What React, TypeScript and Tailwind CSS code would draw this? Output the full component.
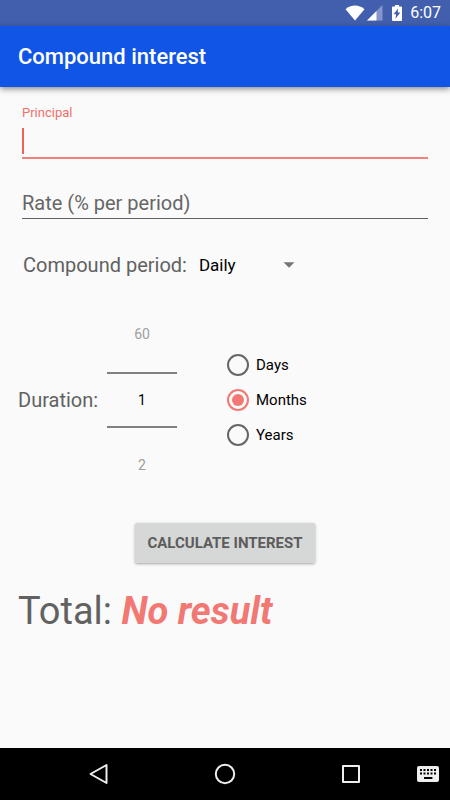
import { useState } from "react";

const units = ["Days", "Months", "Years"];

const StatusBar = () => {
  return (
    <div className="flex h-[26px] items-center justify-end bg-[#425fae] pr-[9px] text-white">
      <svg className="mr-[2px] h-4 w-5" viewBox="0 0 20 16" fill="currentColor">
        <path d="M0.5 4.2C6 -0.6 14 -0.6 19.5 4.2L10 15.5Z" />
      </svg>
      <svg className="mr-[9px] h-4 w-4" viewBox="0 0 16 16" fill="currentColor">
        <path d="M0 15.5L15.5 0V15.5Z" opacity="0.35" />
        <path d="M0 15.5L9.5 6V15.5Z" />
      </svg>
      <svg className="mr-2 h-4 w-[10px]" viewBox="0 0 10 16">
        <path
          d="M1 1.6H3V0H7V1.6H9Q10 1.6 10 2.6V15Q10 16 9 16H1Q0 16 0 15V2.6Q0 1.6 1 1.6Z"
          fill="currentColor"
        />
        <path d="M6 3.6L1.6 9.2H4.2L3.4 13.8L8.4 7.6H5.8Z" fill="#425fae" />
      </svg>
      <span className="text-[16px] leading-5">6:07</span>
    </div>
  );
};

const NavBar = () => {
  return (
    <nav className="flex h-[52px] bg-black pl-9 text-[#eeeeee]">
      <button aria-label="Back" className="flex flex-1 items-center justify-center">
        <svg className="h-6 w-6" viewBox="0 0 24 24" fill="none" stroke="currentColor" strokeWidth="2" strokeLinejoin="round">
          <path d="M19.5 3V21L3.5 12Z" />
        </svg>
      </button>
      <button aria-label="Home" className="flex flex-1 items-center justify-center">
        <svg className="h-6 w-6" viewBox="0 0 24 24" fill="none" stroke="currentColor" strokeWidth="2">
          <circle cx="12" cy="12" r="9.2" />
        </svg>
      </button>
      <button aria-label="Recent apps" className="flex flex-1 items-center justify-center">
        <svg className="h-6 w-6" viewBox="0 0 24 24" fill="none" stroke="currentColor" strokeWidth="2" strokeLinejoin="round">
          <path d="M4 4H20V20H4Z" />
        </svg>
      </button>
      <button aria-label="Keyboard" className="flex w-9 items-center justify-center pr-2">
        <svg className="h-4 w-[22px] shrink-0" viewBox="0 0 22 16">
          <rect width="22" height="16" rx="2" fill="currentColor" />
          <path
            d="M3 4h2M6.5 4h2M10 4h2M13.5 4h2M17 4h2M3 7.6h2M6.5 7.6h2M10 7.6h2M13.5 7.6h2M17 7.6h2M7 12h8.4"
            stroke="#000"
            strokeWidth="2"
          />
        </svg>
      </button>
    </nav>
  );
};

const App = () => {
  const [principal, setPrincipal] = useState("");
  const [unit, setUnit] = useState("Months");

  return (
    <div className="flex min-h-screen flex-col bg-[#fafafa] font-[Roboto,sans-serif] text-[#616161]">
      <StatusBar />
      <header className="flex h-[61px] items-center bg-[#1155e6] px-[18px] shadow-[0_2px_6px_rgba(0,0,0,0.45)]">
        <h1 className="text-[22px] leading-8 font-medium text-white">Compound interest</h1>
      </header>

      <main className="flex flex-1 flex-col">
        {/* text fields */}
        <div className="flex flex-col px-[22px] pt-[17px]">
          <label htmlFor="principal" className="text-[13px] leading-[18px] text-[#f2706c]">
            Principal
          </label>
          <div className="relative">
            <input
              id="principal"
              value={principal}
              onChange={(e) => setPrincipal(e.target.value)}
              className="block h-[37px] w-full border-b-2 border-[#f2807c] text-[20px] caret-transparent outline-none"
            />
            {principal === "" && <span className="absolute top-[6px] left-0 h-[26px] w-[2px] bg-[#ee625e]" />}
          </div>
          <input
            aria-label="Rate (% per period)"
            placeholder="Rate (% per period)"
            className="mt-7 h-8 w-full border-b border-[#616161] text-[20px] outline-none placeholder:text-[#666666]"
          />
        </div>

        {/* compound period */}
        <div className="mt-[30px] flex items-center px-[23px]">
          <label htmlFor="period" className="text-[20px] leading-8">
            Compound period:
          </label>
          <div className="relative ml-3 w-24">
            <select id="period" className="w-full appearance-none text-[17px] leading-8 text-black outline-none">
              <option>Daily</option>
              <option>Monthly</option>
              <option>Yearly</option>
            </select>
            <svg className="pointer-events-none absolute top-[13px] right-0 h-[6px] w-3" viewBox="0 0 12 6" fill="#757575">
              <path d="M0.5 0.3H11.5L6 5.8Z" />
            </svg>
          </div>
        </div>

        {/* duration */}
        <div className="mt-4 flex items-center px-[18px]">
          <label htmlFor="duration" className="w-[89px] text-[20px] leading-8">
            Duration:
          </label>
          <div className="flex w-[70px] flex-col text-[14px] text-[#9e9e9e]">
            <button className="h-[75px]">60</button>
            <input
              id="duration"
              defaultValue="1"
              className="h-14 w-full border-y-2 border-[#808080] text-center text-black outline-none"
            />
            <button className="h-[75px]">2</button>
          </div>
          <div className="ml-[50px] flex flex-col gap-[11px]">
            {units.map((u) => (
              <label key={u} className="flex items-center gap-[7px] text-[15px] leading-6 text-black">
                <input
                  type="radio"
                  name="unit"
                  checked={unit === u}
                  onChange={() => setUnit(u)}
                  className="h-[22px] w-[22px] appearance-none rounded-full border-2 border-[#666666] bg-clip-content p-[3px] checked:border-[#f27874] checked:bg-[#f27874]"
                />
                {u}
              </label>
            ))}
          </div>
        </div>

        <div className="mt-5 flex justify-center">
          <button className="h-10 rounded-[2px] bg-[#d6d7d7] px-3 text-[15px] font-bold text-[#5c5c5c] shadow-[0_1px_3px_rgba(0,0,0,0.35)]">
            CALCULATE INTEREST
          </button>
        </div>

        <p className="mt-6 px-[18px] text-[38px] leading-[48px]">
          Total: <output className="font-bold text-[#f27874] italic">No result</output>
        </p>
      </main>

      <NavBar />
    </div>
  );
};

export default App;
